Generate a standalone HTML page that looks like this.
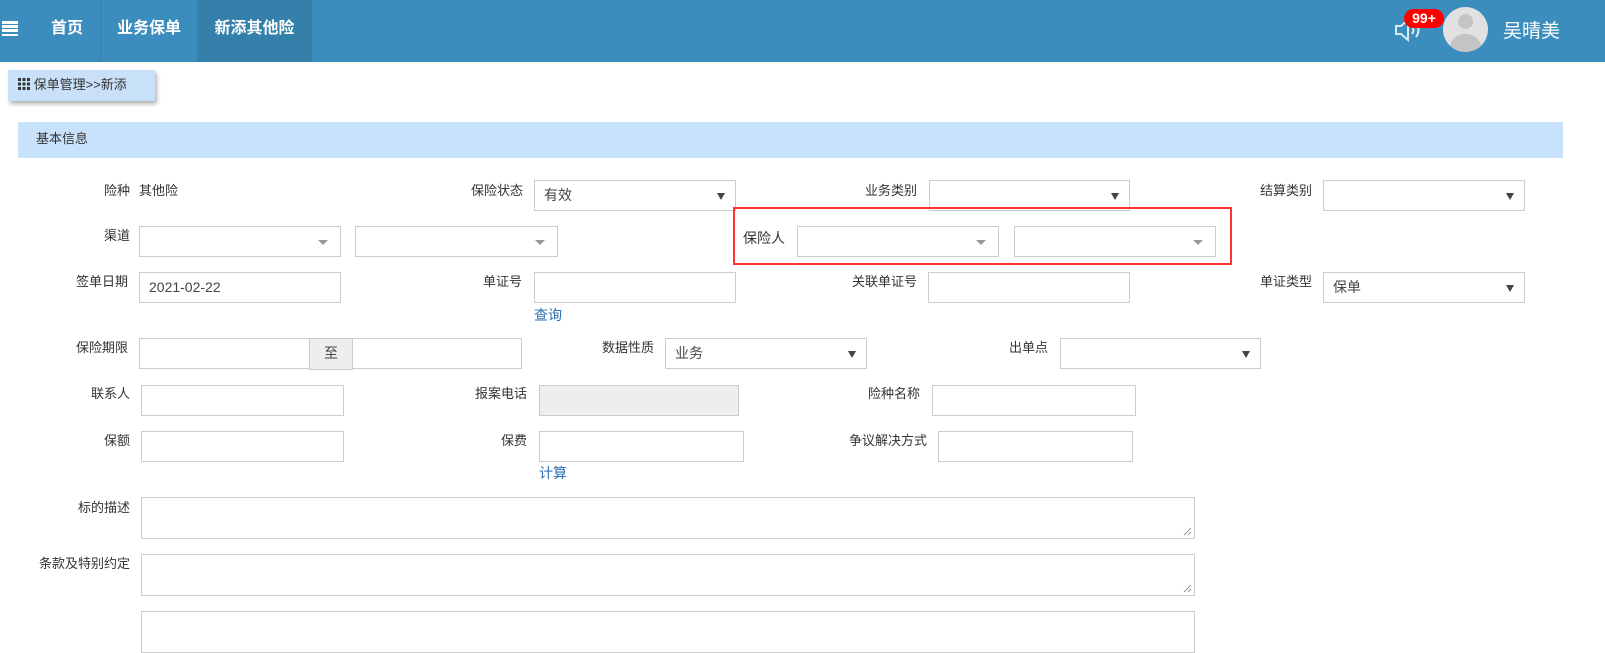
<!DOCTYPE html>
<html><head><meta charset="utf-8">
<style>
*{box-sizing:border-box;margin:0;padding:0}
body{width:1605px;height:629px;overflow:hidden;background:#fff;font-family:"Liberation Sans","Noto Sans CJK SC",sans-serif;font-size:13px;color:#333;position:relative}
.hdr{position:absolute;left:0;top:0;width:1605px;height:62px;background:#3b8dbd}
.tab{position:absolute;top:0;height:62px;line-height:58px;color:#fff;font-weight:bold;font-size:16px;text-align:center}
.a{position:absolute}
.lb{position:absolute;text-align:right;width:120px;font-size:13px;color:#333;line-height:16px}
.in{position:absolute;height:31px;border:1px solid #ccc;background:#fff;padding-left:9px;line-height:29px;font-size:14px;color:#444}
.sel:after{content:"";position:absolute;right:10px;top:12px;border-left:4px solid transparent;border-right:4px solid transparent;border-top:7px solid #444}
.sl2:after{content:"";position:absolute;right:12px;top:13px;border-left:5px solid transparent;border-right:5px solid transparent;border-top:5px solid #999}
.lk{position:absolute;color:#2a6fb5;font-size:14px}
</style></head><body>
<div class="hdr"></div>
<div class="a" style="left:2px;top:21px;width:16px;height:15px">
<div style="height:2.5px;background:#fff;margin-bottom:1.7px"></div><div style="height:2.5px;background:#fff;margin-bottom:1.7px"></div><div style="height:2.5px;background:#fff;margin-bottom:1.7px"></div><div style="height:2.5px;background:#fff"></div></div>
<div class="tab" style="left:34px;width:66px">首页</div>
<div class="a" style="left:100px;top:0;width:1px;height:62px;background:#3580ab"></div>
<div class="tab" style="left:101px;width:96px">业务保单</div>
<div class="tab" style="left:197px;width:115px;background:#3580ab">新添其他险</div>
<svg class="a" style="left:1393px;top:17px" width="30" height="26" viewBox="0 0 30 26"><path d="M3 9h5l7-6v20l-7-6H3z" fill="none" stroke="#dbe9f3" stroke-width="2"/><path d="M19 9q3 4 0 8M23 6q5 7 0 14" fill="none" stroke="#dbe9f3" stroke-width="2"/></svg>
<div class="a" style="left:1404px;top:9px;width:40px;height:19px;background:#f00;border-radius:10px;color:#fff;font-weight:bold;font-size:14px;text-align:center;line-height:19px">99+</div>
<div class="a" style="left:1443px;top:7px;width:45px;height:45px;border-radius:50%;background:#e1e1e1;overflow:hidden">
<div class="a" style="left:15px;top:7px;width:15px;height:15px;border-radius:50%;background:#c4c4c4"></div>
<div class="a" style="left:7px;top:27px;width:31px;height:26px;border-radius:50%;background:#c4c4c4"></div></div>
<div class="a" style="left:1503px;top:16px;color:#fff;font-size:19px">吴晴美</div>

<div class="a" style="left:8px;top:70px;width:147px;height:31px;background:#c8e1f9;box-shadow:2px 3px 4px rgba(0,0,0,.3);padding-left:10px;line-height:29px;font-size:13px">
<span style="display:inline-block;width:12px;height:12px;vertical-align:-1px;background:linear-gradient(90deg,#333 3px,transparent 3px,transparent 4.5px,#333 4.5px,#333 7.5px,transparent 7.5px,transparent 9px,#333 9px);-webkit-mask:linear-gradient(#000 3px,transparent 3px,transparent 4.5px,#000 4.5px,#000 7.5px,transparent 7.5px,transparent 9px,#000 9px);mask:linear-gradient(#000 3px,transparent 3px,transparent 4.5px,#000 4.5px,#000 7.5px,transparent 7.5px,transparent 9px,#000 9px)"></span> 保单管理&gt;&gt;新添</div>

<div class="a" style="left:18px;top:122px;width:1545px;height:36px;background:#c8e2fb;padding-left:18px;line-height:34px;font-size:13px">基本信息</div>

<!-- row1 -->
<div class="lb" style="left:10px;top:183px">险种</div>
<div class="a" style="left:139px;top:183px;line-height:16px">其他险</div>
<div class="lb" style="left:403px;top:183px">保险状态</div>
<div class="in sel" style="left:534px;top:180px;width:202px">有效</div>
<div class="lb" style="left:797px;top:183px">业务类别</div>
<div class="in sel" style="left:929px;top:180px;width:201px"></div>
<div class="lb" style="left:1192px;top:183px">结算类别</div>
<div class="in sel" style="left:1323px;top:180px;width:202px"></div>
<!-- row2 -->
<div class="lb" style="left:10px;top:228px">渠道</div>
<div class="in sl2" style="left:139px;top:226px;width:202px"></div>
<div class="in sl2" style="left:355px;top:226px;width:203px"></div>
<div class="a" style="left:733px;top:207px;width:499px;height:58px;border:2px solid #f33"></div>
<div class="a" style="left:743px;top:228px;font-size:14px">保险人</div>
<div class="in sl2" style="left:797px;top:226px;width:202px"></div>
<div class="in sl2" style="left:1014px;top:226px;width:202px"></div>
<!-- row3 -->
<div class="lb" style="left:8px;top:274px">签单日期</div>
<div class="in" style="left:139px;top:272px;width:202px">2021-02-22</div>
<div class="lb" style="left:402px;top:274px">单证号</div>
<div class="in" style="left:534px;top:272px;width:202px"></div>
<div class="lk" style="left:534px;top:305px">查询</div>
<div class="lb" style="left:797px;top:274px">关联单证号</div>
<div class="in" style="left:928px;top:272px;width:202px"></div>
<div class="lb" style="left:1192px;top:274px">单证类型</div>
<div class="in sel" style="left:1323px;top:272px;width:202px">保单</div>
<!-- row4 -->
<div class="lb" style="left:8px;top:340px">保险期限</div>
<div class="in" style="left:139px;top:338px;width:171px"></div>
<div class="in" style="left:309px;top:338px;width:44px;height:32px;background:#eee;padding:0;text-align:center">至</div>
<div class="in" style="left:352px;top:338px;width:170px"></div>
<div class="lb" style="left:534px;top:340px">数据性质</div>
<div class="in sel" style="left:665px;top:338px;width:202px">业务</div>
<div class="lb" style="left:928px;top:340px">出单点</div>
<div class="in sel" style="left:1060px;top:338px;width:201px"></div>
<!-- row5 -->
<div class="lb" style="left:10px;top:386px">联系人</div>
<div class="in" style="left:141px;top:385px;width:203px"></div>
<div class="lb" style="left:407px;top:386px">报案电话</div>
<div class="in" style="left:539px;top:385px;width:200px;background:#eee"></div>
<div class="lb" style="left:800px;top:386px">险种名称</div>
<div class="in" style="left:932px;top:385px;width:204px"></div>
<!-- row6 -->
<div class="lb" style="left:10px;top:433px">保额</div>
<div class="in" style="left:141px;top:431px;width:203px"></div>
<div class="lb" style="left:407px;top:433px">保费</div>
<div class="in" style="left:539px;top:431px;width:205px"></div>
<div class="lk" style="left:539px;top:463px">计算</div>
<div class="lb" style="left:807px;top:433px">争议解决方式</div>
<div class="in" style="left:938px;top:431px;width:195px"></div>
<!-- textareas -->
<div class="lb" style="left:10px;top:500px">标的描述</div>
<div class="in" style="left:141px;top:497px;width:1054px;height:42px"></div>
<div class="lb" style="left:10px;top:556px">条款及特别约定</div>
<div class="in" style="left:141px;top:554px;width:1054px;height:42px"></div>
<div class="in" style="left:141px;top:611px;width:1054px;height:42px"></div>
<svg class="a" style="left:1183px;top:527px" width="9" height="9"><path d="M1 8L8 1M5 8L8 5" stroke="#999"/></svg>
<svg class="a" style="left:1183px;top:584px" width="9" height="9"><path d="M1 8L8 1M5 8L8 5" stroke="#999"/></svg>
</body></html>
